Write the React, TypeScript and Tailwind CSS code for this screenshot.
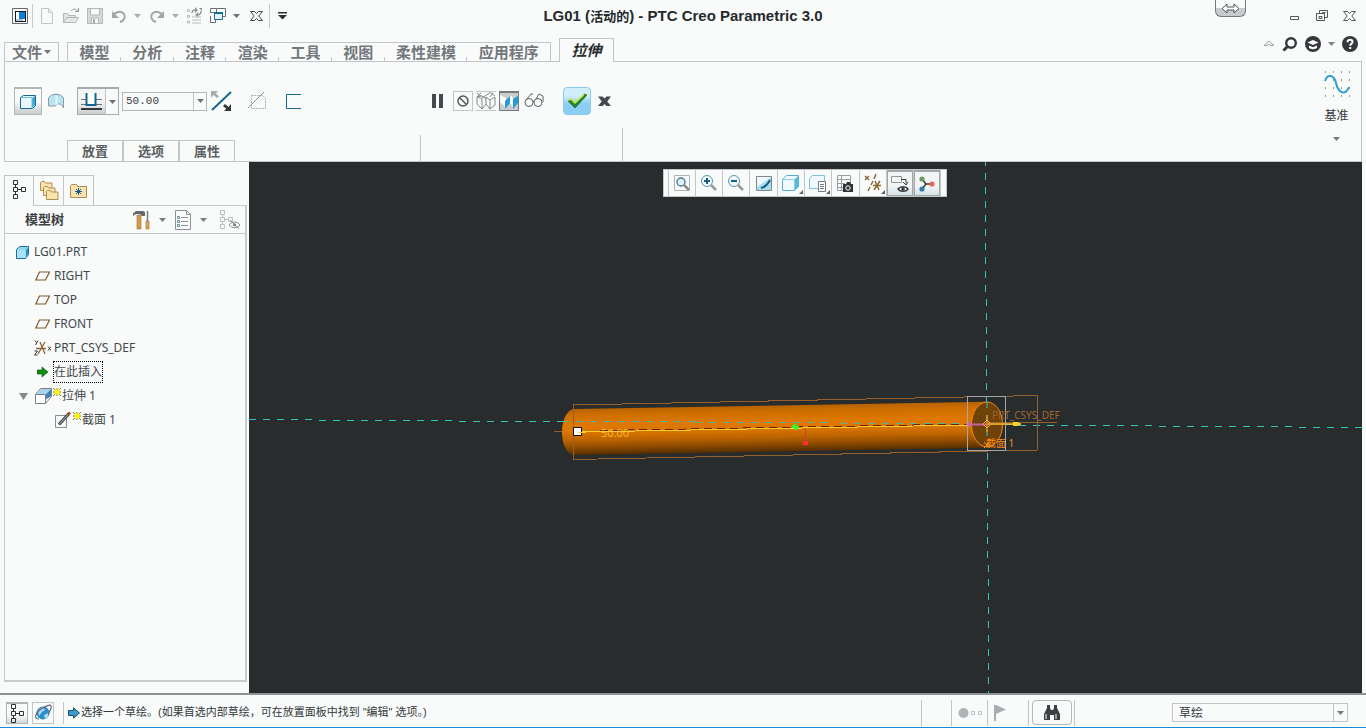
import type { ReactNode } from "react";

const TABS = ["模型", "分析", "注释", "渲染", "工具", "视图", "柔性建模", "应用程序"];

function Caret({ className = "" }: { className?: string }) {
  return (
    <svg className={`shrink-0 ${className}`} width="7" height="4" viewBox="0 0 7 4" aria-hidden="true">
      <path d="M0 0h7L3.5 4z" fill="currentColor" />
    </svg>
  );
}

function Icon({ w = 18, h = 18, children }: { w?: number; h?: number; children: ReactNode }) {
  return (
    <svg className="shrink-0" width={w} height={h} viewBox={`0 0 ${w} ${h}`} fill="none" aria-hidden="true">
      {children}
    </svg>
  );
}

function Plain({ label, className = "", children }: { label: string; className?: string; children: ReactNode }) {
  return (
    <button type="button" aria-label={label} className={`flex shrink-0 items-center justify-center ${className}`}>
      {children}
    </button>
  );
}

function CloseIcon({ color }: { color: string }) {
  return (
    <Icon w={13} h={12}>
      <path d="M.5 1.500h4l2 2 2-2h4L8.800 6l3.700 4.500h-4l-2-2-2 2h-4L4.200 6z" stroke={color} />
    </Icon>
  );
}

function TitleBar() {
  return (
    <header className="grid h-8 grid-cols-[1fr_auto_1fr] items-center">
      <div className="flex h-8 items-center pl-[11px] text-[#86888b]">
        <Plain label="Creo" className="mr-[3px] w-[18px]">
          <Icon>
            <path d="M1.500 1.500h15v15h-15z" stroke="#66686b" />
            <path d="M4 4h11v11H4z" fill="#15191c" />
            <path d="M5 5h9v9H5z" fill="#fff" />
            <path d="M8 5h6v7H8z" fill="#0c7fd6" />
            <path d="M5 12h7v2H5z" fill="#b9c5cc" />
          </Icon>
        </Plain>
        <span className="h-6 w-px bg-[#c8cacb]" />
        <Plain label="新建" className="ml-[6px] w-[16px]">
          <Icon w={16}>
            <path d="M2.500 1.500h7l4 4v11h-11zM9.500 1.500v4h4" stroke="#c3c5c7" />
          </Icon>
        </Plain>
        <Plain label="打开" className="ml-[7px] w-[18px]">
          <Icon>
            <path d="M1.500 15.500v-9h4l1 2h7v2M1.500 15.500l3-5h12l-3 5z" fill="#e4e5e6" stroke="#b4b6b8" />
            <path d="M9 4c2-2.500 5-2.500 7 0M16.500 1v3.500H13" stroke="#97999c" />
          </Icon>
        </Plain>
        <Plain label="保存" className="ml-[7px] w-[16px]">
          <Icon w={16}>
            <path d="M.5 1.500h15v15H.5z" fill="#d7d8da" stroke="#b4b6b9" />
            <path d="M3.500 2v6h9V2M4.500 16v-5h7v5" fill="#f8fafa" stroke="#b4b6b9" />
            <path d="M6 12h2v4H6z" fill="#a8aaad" />
          </Icon>
        </Plain>
        <Plain label="撤消" className="ml-2 w-[16px]">
          <Icon w={16}>
            <path d="M2 9c2-4 8-6 11-2 2 3 0 7-4 8" stroke="#a3a5a8" strokeWidth="2" />
            <path d="M1 4v7h7z" fill="#a3a5a8" />
          </Icon>
        </Plain>
        <Caret className="ml-[7px] text-[#aaacaf]" />
        <Plain label="重做" className="ml-[8px] w-[16px]">
          <Icon w={16}>
            <path d="M14 9c-2-4-8-6-11-2-2 3 0 7 4 8" stroke="#a3a5a8" strokeWidth="2" />
            <path d="M15 4v7H8z" fill="#a3a5a8" />
          </Icon>
        </Plain>
        <Caret className="ml-[7px] text-[#aaacaf]" />
        <Plain label="重新生成" className="ml-[7px] w-[16px]">
          <Icon w={16}>
            <path d="M1.500 2.500h2v2h-2zM1.500 8.500h2v2h-2zM1.500 14h2v2h-2zM6 10h9M6 13h9M6 16h9" stroke="#b9bbbd" />
            <path d="M6 6c0-2 1-3 4-3M15 4c0 3-2 4-4 4" stroke="#929497" strokeWidth="1.500" />
            <path d="M9 0l3 3-3 3zM12 5l-3 3 3 2zM13 1h3v3z" fill="#929497" />
          </Icon>
        </Plain>
        <Plain label="窗口" className="ml-[8px] w-[16px]">
          <Icon w={16}>
            <path d="M6.500 5V1.500h9v8H13M4 5.500H.5v-4h6M.5 9v6.500h5v-4" stroke="#6b6e71" />
            <path d="M4.500 5.500h8v7h-8z" fill="#e7f5fb" stroke="#176d99" />
            <path d="M4 5h9v2H4z" fill="#176d99" />
          </Icon>
        </Plain>
        <Caret className="ml-[7px] text-[#6c6e71]" />
        <Plain label="关闭窗口" className="ml-[10px] w-[13px]">
          <CloseIcon color="#44474b" />
        </Plain>
        <span className="ml-[6px] h-6 w-px bg-[#c8cacb]" />
        <Plain label="自定义快速访问工具栏" className="ml-2 w-[9px]">
          <Icon w={9} h={8}>
            <path d="M0 0h9v1.500H0zM0 3h9L4.500 7.500z" fill="#2d3033" />
          </Icon>
        </Plain>
      </div>
      <h1 className="text-[15px] font-bold text-[#26292c]">
        LG01 (<span className="text-[13px]">活动的</span>) - PTC Creo Parametric 3.0
      </h1>
      <div className="flex h-8 items-center justify-end pr-[10px]">
        <button
          type="button"
          aria-label="展开"
          className="mr-[43px] flex h-[17px] w-[31px] items-center justify-center self-start rounded-b-md border border-t-0 border-[#777a7e] bg-linear-to-b from-[#f8fbfa] from-50% to-[#c8cacd] to-50%"
        >
          <Icon w={19} h={11}>
            <path d="M1 5.500l5-4.500v3h7V1l5 4.500L13 10V7H6v3z" fill="#fff" stroke="#4f5256" />
          </Icon>
        </button>
        <Plain label="最小化" className="w-[12px]">
          <Icon w={12} h={12}>
            <path d="M1.500 6.500h8v3h-8z" stroke="#55585b" />
          </Icon>
        </Plain>
        <Plain label="还原" className="ml-[14px] w-[14px]">
          <Icon w={14} h={14}>
            <path d="M4.500 4V1.500h8v7H10" stroke="#55585b" />
            <path d="M1.500 4.500h8v7h-8zM4 7.500h3v2H4zM7.500 4v-.5h3" stroke="#55585b" />
          </Icon>
        </Plain>
        <Plain label="关闭" className="ml-[14px] w-[13px]">
          <CloseIcon color="#55585b" />
        </Plain>
      </div>
    </header>
  );
}

function RibbonTabs() {
  return (
    <nav className="relative z-10 flex h-[29px] items-end pl-1 text-[15px] leading-none font-bold text-[#74777b]">
      <button
        type="button"
        className="-mb-px flex h-[20px] w-[55px] items-center justify-center gap-[2px] border border-[#c3c6c8]"
      >
        文件
        <Caret />
      </button>
      <div className="-mb-px ml-2 flex h-[20px] w-[484px] items-end border border-[#c3c6c8]">
        {TABS.map((t, i) => (
          <button
            key={t}
            type="button"
            className={`relative flex h-[18px] min-w-0 items-center justify-center ${t.length > 2 ? "flex-[83]" : "flex-[53]"}`}
          >
            {t}
            {i < TABS.length - 1 && <span className="absolute right-0 bottom-0 h-1 w-px bg-[#c3c6c8]" />}
          </button>
        ))}
      </div>
      <button
        type="button"
        className="-mb-px ml-2 flex h-[24px] w-[55px] items-center justify-center border border-b-0 border-[#c3c6c8] bg-[#f8fbfa] text-[#2b2e31] italic"
      >
        拉伸
      </button>
      <div className="mr-2 ml-auto flex items-center gap-[7px] pb-[9px] text-[#36383d]">
        <Plain label="最小化功能区" className="w-[12px]">
          <Icon w={12} h={8}>
            <path d="M1 5.500L6 1l5 4.500H8L6 4 4 5.500z" stroke="#a0a3a6" />
          </Icon>
        </Plain>
        <Plain label="搜索" className="w-[16px]">
          <Icon w={16} h={16}>
            <circle cx="9" cy="7" r="4.800" stroke="currentColor" strokeWidth="2.400" />
            <path d="M5.500 10.500L1.500 14.500" stroke="currentColor" strokeWidth="3" />
          </Icon>
        </Plain>
        <Plain label="学习" className="w-[16px]">
          <Icon w={16} h={16}>
            <circle cx="8" cy="8" r="8" fill="currentColor" />
            <path d="M2.500 6.500L8 4l5.500 2.500L8 9z" fill="#fff" />
            <path d="M4 9.500l4 1.800 4-1.800V12c-2 1.500-6 1.500-8 0z" fill="#fff" />
          </Icon>
        </Plain>
        <Caret className="text-[#7e8185]" />
        <Plain label="帮助" className="w-[16px]">
          <Icon w={16} h={16}>
            <circle cx="8" cy="8" r="8" fill="currentColor" />
            <path d="M5.500 6.200C5.500 2.800 10.500 3 10.500 6c0 1.800-2.300 1.800-2.300 3.800" stroke="#fff" strokeWidth="2" />
            <path d="M7.200 11h2v2h-2z" fill="#fff" />
          </Icon>
        </Plain>
      </div>
    </nav>
  );
}

function Dashboard() {
  return (
    <section className="mx-1 flex h-[101px] shrink-0 border border-[#c3c6c8]">
      <div className="flex w-[416px] flex-col justify-between">
        <div className="flex h-[73px] items-center pt-[5px] pl-[9px]">
          <Plain
            label="拉伸为实体"
            className="h-7 w-7 border border-t-2 border-[#b4b6b9] bg-linear-to-b from-[#f8fbfa] from-50% to-[#c9cbcd]"
          >
            <Icon w={18} h={18}>
              <path d="M1.500 4.500l3-2h12v10l-3 3h-12z" fill="#e9f8fd" stroke="#17688f" />
              <path d="M13 5l3-2v9l-3 3z" fill="#3ea9d8" />
              <path d="M2 4.500h11v11" stroke="#69bfe3" />
            </Icon>
          </Plain>
          <Plain label="拉伸为曲面" className="ml-[5px] w-[18px]">
            <Icon w={18} h={18}>
              <path d="M1.500 6C4 1 14 1 16.500 6v10c-2-5-6-5-8-2H1.500z" fill="#b6e4f5" stroke="#8e9a9f" />
              <path d="M9.500 4v9" stroke="#e5f7fd" strokeWidth="2" />
            </Icon>
          </Plain>
          <div className="ml-3 flex h-7 border border-t-2 border-[#a9abae] bg-linear-to-b from-[#f4f6f6] from-50% to-[#c9cbcd]">
            <Plain label="深度选项" className="w-[27px]">
              <Icon w={23} h={20}>
                <path d="M1 7.500h6M1 12.500h6M15 7.500h7M15 12.500h7" stroke="#707377" />
                <path d="M6.500 1v12h9V1" fill="#fff" stroke="#17688f" strokeWidth="2" />
                <path d="M1 16h21v2H1z" fill="#35383b" />
              </Icon>
            </Plain>
            <Plain label="深度类型" className="w-[13px] border-l border-[#c3c6c8] bg-[#f8fbfa]">
              <Caret className="text-[#707377]" />
            </Plain>
          </div>
          <div className="ml-[3px] flex h-[19px] w-[85px] border border-[#b4b6b9]">
            <input
              aria-label="深度值"
              defaultValue="50.00"
              className="w-0 flex-1 pl-[3px] font-['Liberation_Mono'] text-[11px] text-[#3d4043] outline-none"
            />
            <Plain label="最近使用的值" className="w-[13px] border-l border-[#c3c6c8]">
              <Caret className="text-[#707377]" />
            </Plain>
          </div>
          <Plain label="反向" className="ml-1 w-[21px]">
            <Icon w={21} h={21}>
              <path d="M1 19L20 1" stroke="#17688f" strokeWidth="2" />
              <path d="M0 0h7L4.800 2.200 8 5.500 6 7 2.500 4 0 7z" fill="#a9abae" />
              <path d="M20 20h-7l2.200-2.200L12 15l2-2 3.500 3 2.500-3z" fill="#35383b" />
            </Icon>
          </Plain>
          <Plain label="移除材料" className="ml-[15px] w-[20px]">
            <Icon w={20} h={20}>
              <path d="M4.500 4.500h11l3 3v10h-14z" stroke="#a9abae" strokeDasharray="2 1" />
              <path d="M1 17L17 1" stroke="#8b8e91" />
            </Icon>
          </Plain>
          <Plain label="加厚草绘" className="ml-[17px] w-[18px]">
            <Icon w={18} h={18}>
              <path d="M17 2.500H2.500v14H17" stroke="#17688f" />
            </Icon>
          </Plain>
        </div>
        <div className="flex h-[26px] items-end border-r border-[#c3c6c8] pl-[62px]">
          {["放置", "选项", "属性"].map((t) => (
            <button
              key={t}
              type="button"
              className="h-[21px] w-14 border border-b-0 border-[#c3c6c8] text-[13px] leading-none font-bold text-[#5b5e62]"
            >
              {t}
            </button>
          ))}
        </div>
      </div>

      <div className="flex w-[202px] flex-col justify-between">
        <div className="-mb-3 flex h-[78px] items-center pl-[10px]">
          <Plain label="暂停" className="w-[13px]">
            <Icon w={13} h={16}>
              <path d="M1 1h4v14H1zM8 1h4v14H8z" fill="#45484c" />
            </Icon>
          </Plain>
          <Plain label="无预览" className="ml-[9px] h-5 w-5 border border-[#c3c6c8]">
            <Icon w={14} h={14}>
              <circle cx="7" cy="7" r="5" stroke="#55585c" strokeWidth="1.500" />
              <path d="M3.500 3.500l7 7" stroke="#55585c" strokeWidth="1.500" />
            </Icon>
          </Plain>
          <Plain label="分离" className="ml-[3px] h-5 w-5 border-y border-[#c3c6c8]">
            <Icon w={20} h={18}>
              <path
                d="M1 5l4-4M6 6l9-6M1 5v7l5 5V7L1 4.500l5-.5 4 3M6 17l4-5V5M10 5l4 3v9l-4-5M14 8l5-3v8l-5 4M14 5l3-4M1 1l4 3M15 1l4 3"
                stroke="#6b6e72"
                strokeWidth=".8"
              />
            </Icon>
          </Plain>
          <Plain label="连接" className="ml-[3px] h-5 w-5 border border-t-2 border-[#77797c] bg-[#c9cbcd]">
            <Icon w={18} h={17}>
              <path d="M0 2l6 3v10L0 9zM10 2l3 3v9l-3-4z" fill="#fff" />
              <path d="M5 8l5-5v7l-5 6zM13 6l5-3v7l-5 6z" fill="#249bd8" />
            </Icon>
          </Plain>
          <Plain label="特征预览" className="ml-[5px] w-[20px]">
            <Icon w={20} h={16}>
              <circle cx="5" cy="9.500" r="4" stroke="#5c5f63" />
              <circle cx="14" cy="9.500" r="4" stroke="#5c5f63" />
              <path d="M9 9c0-1 1-1 1 0M2 7l5-6h2M12 6l3-5 4 2v6" stroke="#5c5f63" />
            </Icon>
          </Plain>
          <Plain
            label="确定"
            className="ml-[19px] h-7 w-7 rounded-sm border border-[#8ccbee] bg-linear-to-b from-[#d3eefb] from-30% to-[#8ccdf4] to-60%"
          >
            <Icon w={20} h={16}>
              <path d="M1 8l3-2 4 4 9-9 3 1L8 15z" fill="#178a3b" stroke="#314a18" strokeWidth=".6" />
              <path d="M1.500 7.500L4 6l4 4 9-8.500" stroke="#d8e82a" strokeWidth="1.400" />
            </Icon>
          </Plain>
          <Plain label="取消" className="ml-[7px] w-[13px]">
            <Icon w={13} h={12}>
              <path d="M0 1.500h4.500l2 2 2-2H13L9.200 6.500l3.800 4.500H8.500l-2-2-2 2H0l3.800-4.500z" fill="#45484c" />
            </Icon>
          </Plain>
        </div>
        <div className="h-[33px] border-r border-[#c3c6c8]" />
      </div>

      <div className="ml-auto flex w-[49px] flex-col items-center pt-2">
        <Icon w={28} h={28}>
          <path
            d="M2 2h1M10 2h1M18 2h1M26 2h1M2 10h1M10 10h1M18 10h1M26 10h1M2 18h1M10 18h1M18 18h1M26 18h1M2 26h1M10 26h1M18 26h1M26 26h1"
            stroke="#3a3d40"
          />
          <path d="M2 11C4 4 11 4 13 13s9 14 13 4" stroke="#2f9ed3" strokeWidth="2" />
        </Icon>
        <button type="button" className="mt-2 flex flex-col items-center text-[12px] leading-5 text-[#35383b]">
          基准
          <Caret className="mt-[11px] text-[#77797c]" />
        </button>
      </div>
    </section>
  );
}

function StructureIcon({ color = "#2f3235" }: { color?: string }) {
  return (
    <Icon w={16} h={20}>
      <path
        d="M2.500 1.500h4v4h-4zM2.500 8.500h4v4h-4zM2.500 15.500h4v4h-4zM10.500 8.500h4v4h-4zM4.500 5.500v3M4.500 12.500v3M6.500 10.500h4"
        stroke={color}
      />
    </Icon>
  );
}

function DatumPlane() {
  return (
    <Icon w={15} h={10}>
      <path d="M4.500 1h10l-4 8H.8z" stroke="#7c5a2d" strokeWidth="1.200" />
    </Icon>
  );
}

function NewStar() {
  return (
    <Icon w={8} h={8}>
      <path d="M0 0l8 8M8 0L0 8M4 0v8M0 4h8" stroke="#55520c" strokeWidth=".8" />
      <path d="M1.500 1.500h5v5h-5z" fill="#fff200" />
    </Icon>
  );
}

function ModelTree() {
  const row = "flex h-6 items-center";
  return (
    <ul className="flex-1 pt-[6px] font-['Noto_Sans','Noto_Sans_CJK_SC',sans-serif] text-[12px] text-[#44474b]">
      <li className={`${row} gap-[5px] pl-[11px]`}>
        <Icon w={13} h={13}>
          <path d="M.5 3.500l3-3h9v8l-3 4h-9z" fill="#8cd6f2" stroke="#236e95" />
          <path d="M1 4h8.500v8H1z" fill="#a7e2f7" />
          <path d="M10 4l2-2v6l-2 3z" fill="#2a8fc3" />
        </Icon>
        LG01.PRT
      </li>
      {["RIGHT", "TOP", "FRONT"].map((name) => (
        <li key={name} className={`${row} gap-1 pl-[30px]`}>
          <DatumPlane />
          {name}
        </li>
      ))}
      <li className={`${row} gap-[3px] pl-[29px]`}>
        <Icon w={17} h={16}>
          <path d="M2 8.500h10M4 14l7-12M6 2l5 12" stroke="#8b6434" strokeWidth="1.300" />
          <path d="M1 .5l1.500 2M4 .5L1.500 5M.5 11h3l-3 4h3M14 6.500l3 4M17 6.500l-3 4" stroke="#35383b" />
        </Icon>
        PRT_CSYS_DEF
      </li>
      <li className={`${row} gap-[5px] pl-8`}>
        <Icon w={11} h={12}>
          <path d="M0 4h5V1l6 5-6 5V8H0z" fill="#109010" stroke="#064a06" strokeWidth=".6" />
        </Icon>
        <span className="border border-dotted border-black leading-5">在此插入</span>
      </li>
      <li className={`${row} pl-[14px]`}>
        <Plain label="折叠" className="mr-[7px] w-[9px]">
          <Icon w={9} h={7}>
            <path d="M0 0h9L4.500 7z" fill="#87898c" />
          </Icon>
        </Plain>
        <Icon w={17} h={16}>
          <path d="M.5 6.500l5-6h11v8l-6 7H.5z" fill="#fff" stroke="#7c8185" />
          <path d="M1.500 6l4-5H16l-5.500 5z" fill="#a8d3ec" />
          <path d="M10.500 6.500L16 1v7.500l-5.500 3z" fill="#3f86b4" />
          <path d="M.5 6.500h10v9" stroke="#7c8185" />
        </Icon>
        <span className="mx-[1px] self-start pt-1">
          <NewStar />
        </span>
        拉伸 1
      </li>
      <li className={`${row} pl-[50px]`}>
        <Icon w={17} h={17}>
          <path d="M.5 3.500h11v12H.5z" stroke="#8b8e91" />
          <path d="M4 12.500L14 1.500" stroke="#3f4245" strokeWidth="3" />
          <path d="M4.500 12l9-10" stroke="#b8babd" />
          <path d="M13 2.500l2-2" stroke="#b5482f" strokeWidth="3" />
        </Icon>
        <span className="mx-[1px] self-start pt-1">
          <NewStar />
        </span>
        截面 1
      </li>
    </ul>
  );
}

function Folder({ x, y }: { x: number; y: number }) {
  return (
    <path
      transform={`translate(${x} ${y})`}
      d="M.5 9.500v-8l1-1h3l1 1.500h6.500v7.500z"
      fill="#f9e3ae"
      stroke="#b08d50"
    />
  );
}

function Navigator() {
  return (
    <aside className="flex w-[249px] shrink-0 flex-col pt-[13px] pr-[2px] pb-[11px] pl-1">
      <div className="relative z-10 -mb-px flex h-[31px]">
        <Plain label="模型树" className="w-[30px] border border-b-0 border-[#c3c6c8] bg-[#f8fbfa] pb-1">
          <StructureIcon />
        </Plain>
        <Plain label="文件夹浏览器" className="mb-px w-[30px] border border-b-0 border-l-0 border-[#c3c6c8]">
          <Icon w={20} h={20}>
            <Folder x={1} y={0} />
            <Folder x={4} y={5} />
            <Folder x={7} y={9} />
          </Icon>
        </Plain>
        <Plain label="收藏夹" className="mb-px w-[30px] border border-b-0 border-l-0 border-[#c3c6c8]">
          <Icon w={18} h={16}>
            <path d="M.5 14.500v-12l1-1h5l1 2h9v11z" fill="#f9e3ae" stroke="#b08d50" />
            <path d="M6 6l5 5M11 6l-5 5M8.500 5v7M5 8.500h7" stroke="#175c85" />
          </Icon>
        </Plain>
      </div>
      <div className="flex flex-1 flex-col border border-r-2 border-b-2 border-[#c8cacc]">
        <div className="flex h-[28px] items-center border-b border-[#c3c6c8] pl-5">
          <h2 className="text-[13px] font-bold text-[#3d4043]">模型树</h2>
          <Plain label="设置" className="ml-auto w-[18px]">
            <Icon w={18} h={20}>
              <path d="M0 3.500L3 1h7l2 1v4H9L7 4H3L0 6z" fill="#63666a" />
              <path d="M4 5h4v14H4z" fill="#d79b4f" stroke="#a36f31" strokeWidth=".6" />
              <path d="M14.500 1v10" stroke="#777a7e" strokeWidth="1.500" />
              <path d="M13 11h3v8h-3z" fill="#dca553" stroke="#a36f31" strokeWidth=".6" />
            </Icon>
          </Plain>
          <Caret className="ml-2 text-[#7a7c80]" />
          <Plain label="显示" className="ml-2 w-[18px]">
            <Icon w={18} h={20}>
              <path d="M1.500.5h11l4 4v15h-15zM12.500.5v4h4" stroke="#8b9195" />
              <path d="M7 7.500h7M7 11.500h7M7 15.500h7" stroke="#8b9195" />
              <path d="M3.500 6.500h2v2h-2zM3.500 10.500h2v2h-2zM3.500 14.500h2v2h-2z" stroke="#4d7287" strokeWidth=".8" />
            </Icon>
          </Plain>
          <Caret className="ml-2 text-[#7a7c80]" />
          <Plain label="隐藏项目" className="mr-1 ml-3 w-[22px]">
            <Icon w={22} h={20}>
              <path
                d="M1.500.5h4v4h-4zM1.500 7.500h4v4h-4zM1.500 14.500h4v4h-4zM9.500 7.500h4v4h-4zM3.500 4.500v3M3.500 11.500v3M5.500 9.500h4"
                stroke="#bcbec0"
              />
              <path d="M10 15c3-4 8-4 11 0-3 3.500-8 3.500-11 0zM11 10l9 9" fill="#f8fbfa" stroke="#8b8e91" />
              <circle cx="15.500" cy="14.800" r="1.500" fill="#77797c" />
            </Icon>
          </Plain>
        </div>
        <ModelTree />
      </div>
    </aside>
  );
}

function Corner() {
  return <path d="M26 20v4h-4z" fill="#5c5f63" />;
}

function ViewToolbar() {
  const tools: { label: string; on?: boolean; art: ReactNode }[] = [
    {
      label: "重新调整",
      art: (
        <>
          <path d="M6.500 5.500h15v15h-15z" stroke="#b0b3b6" />
          <circle cx="13" cy="12" r="4" fill="#ddf2fa" stroke="#4a7088" strokeWidth="1.300" />
          <path d="M16 15l5 5" stroke="#8a8d91" strokeWidth="2.500" />
        </>
      ),
    },
    {
      label: "放大",
      art: (
        <>
          <circle cx="12" cy="11" r="5.500" fill="#f2fbfe" stroke="#5a94ad" />
          <path d="M9 11h6M12 8v6" stroke="#175c85" strokeWidth="2" />
          <path d="M16 15l5 5" stroke="#989b9e" strokeWidth="2.500" />
        </>
      ),
    },
    {
      label: "缩小",
      art: (
        <>
          <circle cx="12" cy="11" r="5.500" fill="#f2fbfe" stroke="#5a94ad" />
          <path d="M9 11h6" stroke="#175c85" strokeWidth="2" />
          <path d="M16 15l5 5" stroke="#989b9e" strokeWidth="2.500" />
        </>
      ),
    },
    {
      label: "重画",
      art: (
        <>
          <path d="M6.500 6.500h15v14h-15z" fill="#a9def2" stroke="#80868a" />
          <path d="M7 7h14L7 17z" fill="#eef9fd" />
          <path d="M11 18c4-1 7-4 9-8" stroke="#175c85" strokeWidth="2" />
        </>
      ),
    },
    {
      label: "显示样式",
      art: (
        <>
          <path d="M5.500 9.500l4-4h12v11l-4 4h-12z" fill="#eefafd" stroke="#5badd0" />
          <path d="M17.500 9.500l4-4v11l-4 4z" fill="#57b9e0" />
          <path d="M6 9.500h11.500V20" stroke="#8ccce6" />
          <Corner />
        </>
      ),
    },
    {
      label: "已保存方向",
      art: (
        <>
          <path d="M5.500 8.500l3-3h12v9l-3 4h-12z" fill="#eefafd" stroke="#7fc0dd" />
          <path d="M14.500 11.500h7v10h-7z" fill="#fff" stroke="#77797c" />
          <path d="M16 14.500h4M16 16.500h4M16 18.500h4" stroke="#77797c" />
          <Corner />
        </>
      ),
    },
    {
      label: "视图管理器",
      art: (
        <>
          <path d="M6.500 5.500h13v15h-13zM6 9.500h13M6 13.500h8M6 17.500h8M10.500 6v14" stroke="#9a9da0" />
          <path d="M12 14h3l1-2h3l1 2h2v8H12z" fill="#303336" />
          <circle cx="17" cy="18" r="2.200" fill="#303336" stroke="#fff" />
        </>
      ),
    },
    {
      label: "基准显示过滤器",
      art: (
        <>
          <path
            d="M6 6l4 4M10 6l-4 4M17 4l-2 5M14 11l-2 4M11 17l-2 4M14 15.500h8M15 20l6-9M16 11l4 9"
            stroke="#8b6434"
            strokeWidth="1.400"
          />
          <Corner />
        </>
      ),
    },
    {
      label: "注释显示",
      on: true,
      art: (
        <>
          <path d="M5.500 5.500h10v6h-10z" fill="#f6f7f7" stroke="#929598" />
          <path d="M15 8.500h5v4M17 11l3 3 2-3" stroke="#36393c" />
          <path d="M12 18c2-3 8-3 10 0-2 3-8 3-10 0z" fill="#fff" stroke="#36393c" strokeWidth="1.500" />
          <circle cx="17" cy="18" r="1.800" fill="#36393c" />
        </>
      ),
    },
    {
      label: "旋转中心",
      on: true,
      art: (
        <>
          <path d="M9 8l4 5-4 5M13 13h7" stroke="#35383b" strokeWidth="1.500" />
          <circle cx="9" cy="8" r="2.600" fill="#6c9a5e" />
          <circle cx="19" cy="13" r="2.600" fill="#e06a50" />
          <circle cx="9" cy="18" r="2.600" fill="#3879a8" />
        </>
      ),
    },
  ];
  return (
    <div className="relative flex h-[28px] w-[284px] border border-[#c3c6c8] bg-[#f8fbfa] px-1">
      {tools.map((t) => (
        <div key={t.label} className="flex min-w-0 flex-1 border-l border-[#c3c6c8] last:border-r">
          <Plain
            label={t.label}
            className={`min-w-0 flex-1 overflow-hidden ${
              t.on ? "border border-t-2 border-[#a4a7aa] bg-linear-to-b from-[#f3f5f5] from-60% to-[#d5e2e8]" : ""
            }`}
          >
            <Icon w={28} h={26}>
              {t.art}
            </Icon>
          </Plain>
        </div>
      ))}
    </div>
  );
}

function Viewport() {
  return (
    <main className="relative mr-1 flex flex-1 items-start justify-center overflow-hidden bg-[#282c2d] pt-[7px] pr-[2px]">
      <svg
        className="absolute inset-0 h-full w-full font-['Noto_Sans','Noto_Sans_CJK_SC',sans-serif]"
        viewBox="249 162 1113 531"
        preserveAspectRatio="xMidYMid slice"
        fill="none"
        aria-label="LG01 模型视图"
      >
        <defs>
          <linearGradient id="rod" x1="0" y1="0" x2="0" y2="1">
            <stop offset="0" stopColor="#b86200" />
            <stop offset=".12" stopColor="#cc6e00" />
            <stop offset=".35" stopColor="#de7802" />
            <stop offset=".5" stopColor="#dc7600" />
            <stop offset=".68" stopColor="#bd6400" />
            <stop offset=".84" stopColor="#8e4b00" />
            <stop offset="1" stopColor="#552e00" />
          </linearGradient>
        </defs>
        <g stroke="#2fc6c2" shapeRendering="crispEdges">
          <path d="M985 161.500L989 693" strokeDasharray="7 7" strokeDashoffset="2" />
          <path d="M249 419.500L1362 427.500" strokeDasharray="7 7" />
        </g>
        <path d="M554 431.500h22" stroke="#8b5d2c" />
        {/* skewed so the shading follows the slope of the rod */}
        <g transform="translate(574 409) skewY(-1)">
          <path d="M0 0H413V46H0C-16 44-16 2 0 0z" fill="url(#rod)" />
        </g>
        <ellipse cx="987" cy="424.500" rx="15.500" ry="22.500" fill="#6e4209" stroke="#f08a12" />
        <path d="M562 421.500h133M695 422.500h140M840 423.500h130" stroke="#4cb8a4" strokeDasharray="7 7" />
        <path d="M987 401v46" stroke="#2fc6c2" strokeDasharray="7 7" />
        <g stroke="#95602b" shapeRendering="crispEdges">
          <path d="M573.500 405L1037.500 395.500V450L573.500 459.500z" />
          <path d="M987 422.500h70" />
        </g>
        <path d="M967.500 396.500h38v54h-38z" stroke="#a4a7ac" shapeRendering="crispEdges" />
        <path d="M600 430.500L970 424" stroke="#761a12" strokeDasharray="8 5" shapeRendering="crispEdges" />
        <path d="M580 432L970 425" stroke="#ffd02e" shapeRendering="crispEdges" />
        <path d="M966 424.500h22M970 421v6" stroke="#c9609f" strokeWidth="2" />
        <path d="M988 424h33" stroke="#ffc32a" strokeWidth="1.500" />
        <path d="M1013 422h5l3 2-3 2h-5z" fill="#ffd02e" />
        <path d="M987 415v17M983 424l4-4 4 4-4 4z" stroke="#ffa51e" />
        <path d="M573.500 427.500h8v8h-8z" fill="#fff" stroke="#111" />
        <path d="M578 432.500h8" stroke="#ffd02e" />
        <path d="M792 427h7M795.500 424v6M793 425l5 4" stroke="#2dfa2d" strokeWidth="2" />
        <path d="M805.500 428v14" stroke="#d9392a" />
        <path d="M803 441h5v4h-5z" fill="#ff3030" />
        <path d="M984 442l6 6M990 442l-6 6" stroke="#ff8a0d" />
        <text x="601" y="437" fontSize="11" fill="#f3b52a">
          50.00
        </text>
        <text x="992" y="419" fontSize="10" fill="#a0672e">
          PRT_CSYS_DEF
        </text>
        <text x="986" y="447" fontSize="10" fill="#ff8a0d">
          截面 1
        </text>
      </svg>
      <ViewToolbar />
    </main>
  );
}

function StatusBar() {
  return (
    <footer className="flex h-[35px] shrink-0 items-center border-t-2 border-b border-t-[#8f9293] border-b-[#1a8ad6] pt-[3px] pl-[6px] text-[11px] text-[#35383b]">
      <Plain
        label="显示导航器"
        className="h-[22px] w-[22px] overflow-hidden border border-t-2 border-[#b0b3b5] bg-linear-to-b from-[#f8fbfa] from-60% to-[#cfd8dc]"
      >
        <StructureIcon />
      </Plain>
      <Plain label="显示浏览器" className="ml-1 h-[22px] w-[22px] border border-[#c3c6c8]">
        <Icon w={18} h={18}>
          <circle cx="9" cy="9" r="6.500" fill="#2b8ecb" />
          <path d="M4 6l5-3 2 3-3 2-3 4zM10 11l4-2v4l-3 2z" fill="#a4daf3" />
          <path d="M5 15C-1 15 2 8 7 5s9-5 10-3-1 5-3 8" stroke="#65696d" strokeWidth="1.200" />
        </Icon>
      </Plain>
      <span className="ml-[9px] h-[22px] w-px bg-[#c3c6c8]" />
      <span className="mr-px ml-1 flex">
        <Icon w={12} h={12}>
          <path d="M.5 3.500h5V.8L11.500 6l-6 5.200V8.500h-5z" fill="#3d9cc9" stroke="#184d69" />
        </Icon>
      </span>
      <p className="whitespace-nowrap">选择一个草绘。(如果首选内部草绘，可在放置面板中找到 "编辑" 选项。)</p>
      <div className="ml-auto flex h-full items-center pr-[18px]">
        <span className="h-[26px] w-px bg-[#c3c6c8]" />
        <span className="ml-[29px] h-[26px] w-px bg-[#c3c6c8]" />
        <span className="ml-[6px] flex w-[29px]">
          <Icon w={26} h={12}>
            <circle cx="5.500" cy="6" r="5" fill="#b1b4b6" />
            <path d="M13.500 4.500h3v3h-3zM20.500 4.500h3v3h-3z" stroke="#b3c6cd" />
          </Icon>
        </span>
        <span className="h-[26px] w-px bg-[#c3c6c8]" />
        <span className="ml-[5px] flex w-[35px]">
          <Icon w={14} h={16}>
            <path d="M1 0h2v16H1zM3 0l10 4.500L3 9z" fill="#a9acaf" />
          </Icon>
        </span>
        <span className="h-[26px] w-px bg-[#c3c6c8]" />
        <Plain label="查找" className="ml-[3px] h-[25px] w-[40px] rounded border border-[#b4b6b9]">
          <Icon w={18} h={16}>
            <path d="M4 0h3v3l1 2h2l1-2V0h3v3l3 6v6h-6v-5H7v5H1V9l3-6z" fill="#3c3f43" />
            <path d="M2 9h2v5H2zM12 9h2v5h-2z" fill="#9fa2a5" />
          </Icon>
        </Plain>
        <span className="ml-[2px] h-[26px] w-px bg-[#c3c6c8]" />
        <div className="relative ml-[97px] h-[19px] w-[176px] border border-[#c3c6c8]">
          <select
            aria-label="选择过滤器"
            className="block h-full w-full appearance-none pl-[6px] text-[12px] leading-none text-[#35383b] outline-none"
          >
            <option>草绘</option>
          </select>
          <span className="pointer-events-none absolute inset-y-0 right-0 flex w-[14px] items-center justify-center border-l border-[#c3c6c8]">
            <Caret className="text-[#77797c]" />
          </span>
        </div>
      </div>
    </footer>
  );
}

export default function App() {
  return (
    <div className="flex h-screen flex-col overflow-hidden bg-[#f8fbfa] font-['Liberation_Sans','Noto_Sans_CJK_SC',sans-serif]">
      <TitleBar />
      <RibbonTabs />
      <Dashboard />
      <div className="flex min-h-0 flex-1">
        <Navigator />
        <Viewport />
      </div>
      <StatusBar />
    </div>
  );
}
